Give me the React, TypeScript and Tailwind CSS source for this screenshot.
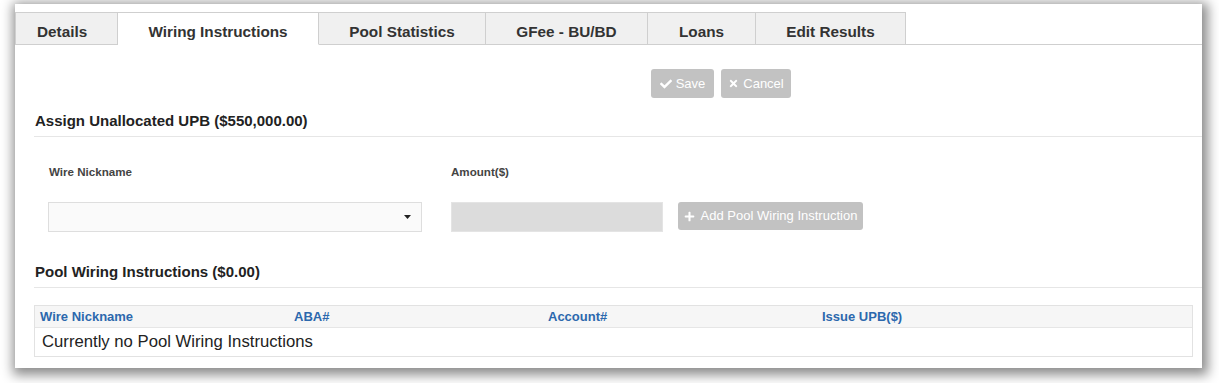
import React from "react";
import { FaCheck, FaTimes, FaPlus } from "react-icons/fa";

const tabs = [
  { label: "Details", w: "w-[103px]", extra: "justify-start pl-[21px]" },
  { label: "Wiring Instructions", w: "w-[201px]", active: true },
  { label: "Pool Statistics", w: "w-[167px]" },
  { label: "GFee - BU/BD", w: "w-[162px]" },
  { label: "Loans", w: "w-[108px]" },
  { label: "Edit Results", w: "w-[150px]" },
];

export default function App() {
  return (
    <div
      className="w-[1219px] h-[383px] bg-white overflow-hidden pt-[4px] pl-[15px]"
      style={{ fontFamily: '"Liberation Sans", Arial, sans-serif' }}
    >
      <div className="w-[1187px] h-[364px] bg-white shadow-[2px_3px_11px_4px_rgba(0,0,0,0.45)] pt-[8px]">
        {/* Tabs */}
        <div className="flex h-[33px] border-b border-[#cfcfcf]">
          {tabs.map((t, i) => (
            <div
              key={t.label}
              className={`${t.w} h-[33px] flex items-center pt-[7px] ${t.extra ?? "justify-center"} text-[15.3px] font-bold text-[#333] border-t border-r border-[#cfcfcf] ${
                i === 0 ? "border-l" : ""
              } ${t.active ? "bg-white border-b border-b-white" : "bg-[#f0f0f0] border-b"}`}
            >
              {t.label}
            </div>
          ))}
        </div>

        <div className="pl-[19px]">
          {/* Save / Cancel */}
          <div className="flex gap-[7px] mt-[24px] ml-[617px]">
            <div className="w-[63px] h-[29px] rounded-[3px] bg-[#c2c2c2] flex items-center justify-center gap-[4px] text-white text-[13px]">
              <FaCheck className="w-[12px] h-[12px]" />
              <span>Save</span>
            </div>
            <div className="w-[70px] h-[29px] rounded-[3px] bg-[#c2c2c2] flex items-center justify-center gap-[4px] text-white text-[13px]">
              <FaTimes className="w-[11px] h-[11px]" />
              <span>Cancel</span>
            </div>
          </div>

          {/* Heading 1 */}
          <div className="mt-[14px] pb-[6px] border-b border-[#e6e6e6]">
            <div className="pl-px h-[18px] leading-[18px] text-[15px] font-bold text-[#222]">
              Assign Unallocated UPB ($550,000.00)
            </div>
          </div>

          {/* Form */}
          <div className="flex mt-[28px]">
            <div className="ml-[14px] w-[374px]">
              <div className="pl-px h-[14px] leading-[14px] text-[11.6px] font-bold text-[#444]">
                Wire Nickname
              </div>
              <div className="mt-[23px] h-[30px] bg-[#fafafa] border border-[#dedede] flex items-center justify-end pr-[10px]">
                <svg width="7" height="4" viewBox="0 0 7 4">
                  <path d="M0 0 L7 0 L3.5 4 Z" fill="#222" />
                </svg>
              </div>
            </div>
            <div className="ml-[29px] w-[212px]">
              <div className="h-[14px] leading-[14px] text-[11.6px] font-bold text-[#444]">
                Amount($)
              </div>
              <div className="mt-[23px] h-[30px] bg-[#dcdcdc] border border-[#e4e4e4]" />
            </div>
            <div className="ml-[15px] pt-[37px]">
              <div className="w-[185px] h-[28px] rounded-[3px] bg-[#c2c2c2] flex items-center justify-center gap-[6px] text-white text-[13px]">
                <FaPlus className="w-[11px] h-[11px]" />
                <span>Add Pool Wiring Instruction</span>
              </div>
            </div>
          </div>

          {/* Heading 2 */}
          <div className="mt-[31px] pb-[6px] border-b border-[#e6e6e6]">
            <div className="pl-px h-[18px] leading-[18px] text-[15px] font-bold text-[#222]">
              Pool Wiring Instructions ($0.00)
            </div>
          </div>

          {/* Table */}
          <div className="mt-[17px] mr-[9px] border border-[#e2e2e2]">
            <div className="flex h-[22px] items-center bg-[#f6f6f6] border-b border-[#e6e6e6] text-[13px] font-bold text-[#2c68ad]">
              <div className="w-[254px] pl-[5px]">Wire Nickname</div>
              <div className="w-[254px] pl-[5px]">ABA#</div>
              <div className="w-[274px] pl-[5px]">Account#</div>
              <div className="flex-1 pl-[5px]">Issue UPB($)</div>
            </div>
            <div className="h-[28px] flex items-center pl-[7px] text-[16.7px] text-[#222]">
              Currently no Pool Wiring Instructions
            </div>
          </div>
        </div>
      </div>
    </div>
  );
}
